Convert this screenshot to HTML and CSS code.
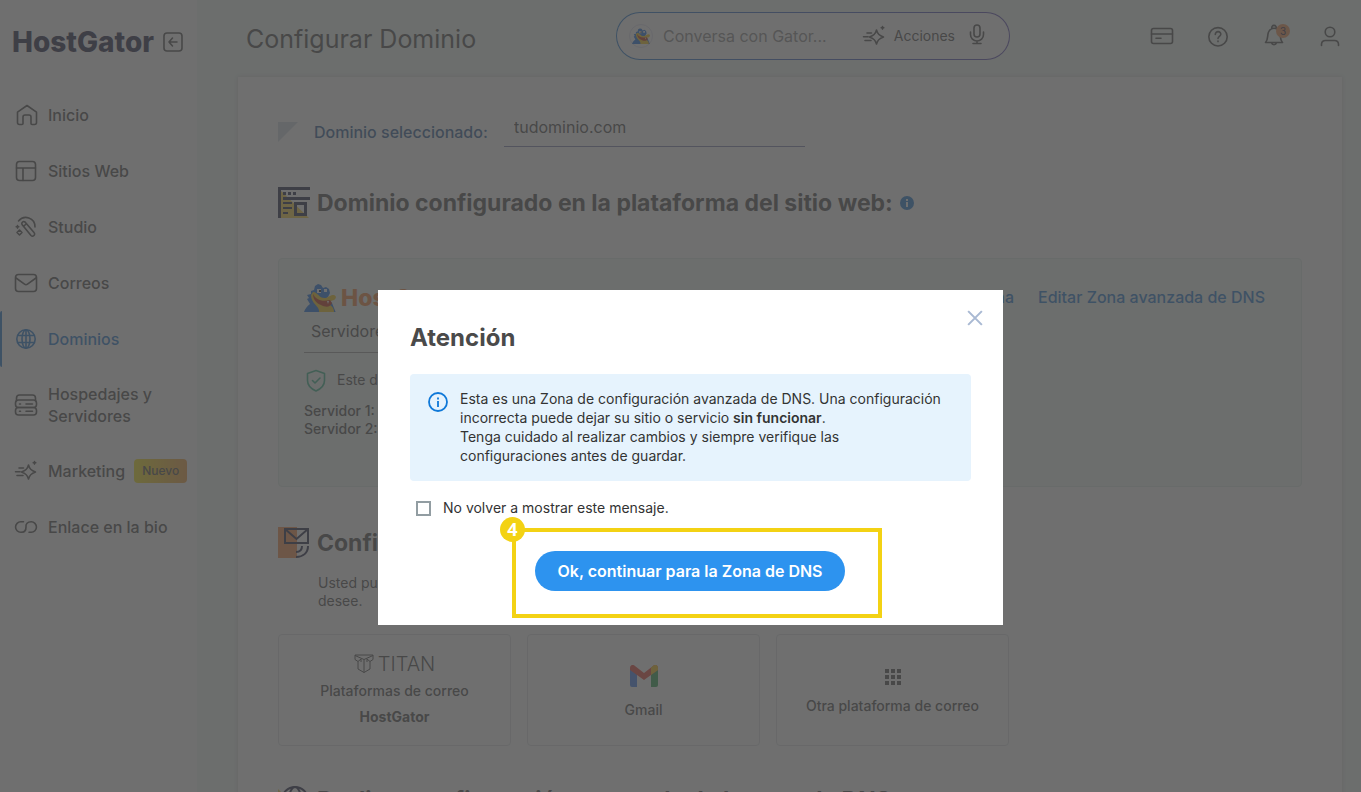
FILE: index.html
```html
<!DOCTYPE html>
<html lang="es">
<head>
<meta charset="utf-8">
<title>Configurar Dominio</title>
<link rel="stylesheet" href="styles.css">
</head>
<body>
<svg class="defs" aria-hidden="true">
  <symbol id="spark" viewBox="0 0 24 24">
    <path d="M14.500 6c1 4 2.500 5.500 7 7-4.500 1.500-6 3-7 7-1-4-2.500-5.500-7-7 4.500-1.500 6-3 7-7zM5 9h4.500M1.500 12.800h4.500M3 16.500h6M20.500 2.500v2.600M19.200 3.800h2.600"/>
  </symbol>
  <symbol id="gator" viewBox="0 0 32 28">
    <path fill="#1a6fe0" d="M0 28c1-3 3-6 6-8-1-2-2-3-3-5l2-1-2-3 4-1V7l3-1 1-4 3-2 3 1 2 3 3-1 3 2 1 4-2 4-2 2 6 4 4 10z"/>
    <path fill="#f5c518" d="M9 8c5 0 6 7 13 6 3-1 4-3 8-3 3 1 2 4 0 5-2 1-4 1-6 1l1 3c2 2 5 3 5 8H15c1-6-8-8-8-17z"/>
    <path fill="#c22d12" d="M9 10c3 6 9 8 17 6l2 3c-2 5-7 4-11 2-5-2-8-6-8-11z"/>
    <path fill="#fff" d="M13 5h4v4h-4zM20 5h3v3h-3zM23 17h2l-1 3z"/><path fill="#222" d="M15 6h2v2h-2z"/>
  </symbol>
</svg>
<div class="app">
  <aside class="sidebar">
    <div class="brand">
      <span class="brand-name">HostGator</span>
      <button class="icon-btn" aria-label="Contraer menú"><svg class="ico ico-20" viewBox="0 0 20 20"><rect x="1" y="1" width="18" height="18" rx="3"/><path d="M14 10H6M9.500 6L6 10l3.500 4"/></svg></button>
    </div>
    <nav class="nav">
      <a href="#" class="nav-item"><svg class="ico" viewBox="0 0 24 24"><path d="M3.500 9.200L13 2.500l9.500 6.700v10.300a2 2 0 0 1-2 2h-2.500a1 1 0 0 1-1-1v-6.500a2 2 0 0 0-2-2h-4a2 2 0 0 0-2 2v6.500a1 1 0 0 1-1 1H5.500a2 2 0 0 1-2-2z"/></svg>Inicio</a>
      <a href="#" class="nav-item"><svg class="ico" viewBox="0 0 24 24"><rect x="2.500" y="2.500" width="19" height="19" rx="3"/><path d="M2.500 9h19M9 9v12.500"/></svg>Sitios Web</a>
      <a href="#" class="nav-item"><svg class="ico" viewBox="0 0 24 24"><path d="M4.500 6C10-.5 21 2.500 21 12M8 9.500a2 2 0 0 1 3-2.500l9 10.500a2 2 0 0 1-3 3zM9.500 11.500l2.500-2.500M3.500 10.500v2.600M2.200 11.800h2.600M5.500 15l2.500 2.500L5.500 20 3 17.500z"/></svg>Studio</a>
      <a href="#" class="nav-item"><svg class="ico" viewBox="0 0 24 24"><rect x="1.500" y="3.500" width="21" height="17" rx="3"/><path d="M2 7l8.500 6.200a2.500 2.500 0 0 0 3 0L22 7"/></svg>Correos</a>
      <a href="#" class="nav-item active"><svg class="ico" viewBox="0 0 24 24"><circle cx="12" cy="12" r="9.200"/><ellipse cx="12" cy="12" rx="4" ry="9.200"/><path d="M4 8.500h16M4 15.500h16M12 3v18"/></svg>Dominios</a>
      <a href="#" class="nav-item tall"><svg class="ico" viewBox="0 0 24 24"><path d="M2.500 8V5a3 3 0 0 1 3-3h13a3 3 0 0 1 3 3v3"/><rect x="1.500" y="7" width="21" height="7.500" rx="3"/><rect x="1.500" y="14.500" width="21" height="7.500" rx="3"/><path d="M5.500 11h1M12 11h6.500M5.500 18.200h1M12 18.200h6.500"/></svg><span>Hospedajes y Servidores</span></a>
      <a href="#" class="nav-item"><svg class="ico"><use href="#spark"/></svg>Marketing<span class="tag">Nuevo</span></a>
      <a href="#" class="nav-item"><svg class="ico" viewBox="0 0 24 24"><path d="M9.500 6.800H6.800a5.200 5.200 0 0 0 0 10.500c3.700 0 5.200-2 5.200-5.300M15 17.300h2.200a5.200 5.200 0 0 0 0-10.500c-3.700 0-5.700 2-5.200 5.200 0 3-1 5.300-4 5.300"/></svg>Enlace en la bio</a>
    </nav>
  </aside>

  <div class="main">
    <header class="topbar">
      <h1>Configurar Dominio</h1>
      <div class="chat">
        <span class="avatar"><svg viewBox="0 0 32 28"><use href="#gator"/></svg></span>
        <input class="chat-input" type="text" aria-label="Conversa con Gator" placeholder="Conversa con Gator...">
        <button class="chat-action"><svg class="ico"><use href="#spark"/></svg>Acciones</button>
        <button class="icon-btn" aria-label="Dictar"><svg class="ico" viewBox="0 0 24 24"><rect x="9" y="1" width="6" height="12" rx="3"/><path d="M5.500 8v2.500a6.500 6.500 0 0 0 13 0V8M12 17v2.500M8 19.500h8"/></svg></button>
      </div>
      <div class="tools">
        <button class="icon-btn" aria-label="Facturación"><svg class="ico" viewBox="0 0 24 24"><rect x="1.500" y="4.500" width="21" height="15" rx="2"/><path d="M1.500 10h21M6 14.200h5"/></svg></button>
        <button class="icon-btn" aria-label="Ayuda"><svg class="ico" viewBox="0 0 24 24"><circle cx="12" cy="12.800" r="9.200"/><path d="M9.300 10.500c0-4 5.700-3.500 5.500-.2 0 2-2.800 2-2.800 4.200M12 17v.6"/></svg></button>
        <button class="icon-btn bell" aria-label="Notificaciones"><svg class="ico" viewBox="0 0 24 24"><path d="M10 4.500a2.200 2.200 0 1 1 4 0M3.500 18.500c3-3 1.500-7 3-10.500 2-5 9-5 11 0 1.500 3.500 0 7.500 3 10.500zM9.500 18.800a2.600 2.600 0 0 0 5 0"/></svg><span class="count">3</span></button>
        <button class="icon-btn" aria-label="Cuenta"><svg class="ico" viewBox="0 0 24 24"><circle cx="12" cy="8" r="4.800"/><path d="M3.500 21.500v-1.500a4 4 0 0 1 4-3.500h9a4 4 0 0 1 4 3.500v1.500"/></svg></button>
      </div>
    </header>

    <main class="panel">
      <div class="domain-row">
        <svg class="corner" viewBox="0 0 20 20"><path d="M0 0h20L0 20z"/></svg>
        <label for="domain">Dominio seleccionado:</label>
        <input id="domain" type="text" value="tudominio.com">
      </div>

      <section class="site">
        <h2><svg class="h-ico" viewBox="0 0 32 32"><path fill="#f7cf3d" d="M3 4l28 27H3z"/><path fill="#1f2044" d="M0 0h32v3H3v28H0zM5 5h3v3H5zM10 5h3v3h-3zM15 5h3v3h-3zM5 10h27v3H5zM5 15h9v2H5zM5 20h9v2H5zM5 25h5v2H5zM16 15h13v14H16zm3 3v8h7v-8z" fill-rule="evenodd"/></svg>Dominio configurado en la plataforma del sitio web:<svg class="info-dot" viewBox="0 0 14 14"><circle cx="7" cy="7" r="7"/><path d="M6 3h2v2H6zM6 6h2v5H6z"/></svg></h2>
        <div class="server-card">
          <div class="server-head">
            <div class="server-brand"><svg viewBox="0 0 32 28"><use href="#gator"/></svg>HostGator</div>
            <a href="#">Configurar zona</a>
            <a href="#">Editar Zona avanzada de DNS</a>
          </div>
          <div class="server-type">Servidores</div>
          <div class="status"><svg class="ico shield" viewBox="0 0 24 24"><path d="M12 2.500l8.500 3v7c0 5-4 8.500-8.500 10.500-4.500-2-8.500-5.500-8.500-10.500v-7zM8.500 12.500l2.500 2.500 5-5"/></svg>Este dominio</div>
          <div class="ns">Servidor 1: dns1<br>Servidor 2: dns2</div>
        </div>
      </section>

      <section class="mail">
        <h2><svg class="h-ico" viewBox="0 0 32 32"><path fill="#f58a45" d="M0 0h19v31H0z"/><path fill="none" stroke="#1f2044" stroke-width="2" d="M7 2h23v14H7zM7 2l11.500 10L30 2M18 25c3.500 0 6-2 6-6M18 30c7 0 12-4 12-11"/></svg>Configurar correo</h2>
        <p>Usted puede elegir la plataforma de correo electrónico que<br>desee.</p>
        <div class="options">
          <button class="option"><span class="titan"><svg viewBox="0 0 20 20"><path d="M1 1h18v4.500l-3 2V15l-6 3.500L4 15V7.500l-3-2zM1 1.500L10 5.500l9-4M10 5.500v13M4 7.500l3-2.500v3M16 7.500L13 5v3"/></svg>TITAN</span><span>Plataformas de correo</span><strong>HostGator</strong></button>
          <button class="option gmail"><svg viewBox="0 0 28 22"><path fill="#3f7df0" d="M0 3l7 5v14H2a2 2 0 0 1-2-2z"/><path fill="#2aa352" d="M21 8l7-5v17a2 2 0 0 1-2 2h-5z"/><path fill="#e84335" d="M0 3C0 0 3-1 5 1l9 7 9-7c2-2 5-1 5 2v2L14 15 0 5z"/><path fill="#f8c416" d="M21 2.500l2-1.500c2-2 5-1 5 2v2l-7 5z"/></svg><span>Gmail</span></button>
          <button class="option other"><svg viewBox="0 0 16 16"><path d="M0 0h4v4H0zM6 0h4v4H6zM12 0h4v4h-4zM0 6h4v4H0zM6 6h4v4H6zM12 6h4v4h-4zM0 12h4v4H0zM6 12h4v4H6zM12 12h4v4h-4z"/></svg><span>Otra plataforma de correo</span></button>
        </div>
      </section>

      <section class="records">
        <h2><svg class="h-ico" viewBox="0 0 32 32"><path fill="#f7cf3d" d="M0 3l20 20H0z"/><g fill="none" stroke="#1f2044" stroke-width="2"><circle cx="17" cy="14" r="13"/><ellipse cx="17" cy="14" rx="6" ry="13"/></g></svg>Realizar configuración avanzada de la zona de DNS</h2>
      </section>
    </main>
  </div>
</div>

<div class="overlay">
  <div class="dialog" role="dialog" aria-modal="true" aria-labelledby="dlg-title">
    <button class="close" aria-label="Cerrar"><svg viewBox="0 0 14 14"><path d="M1 1l12 12M13 1L1 13"/></svg></button>
    <h2 id="dlg-title">Atención</h2>
    <div class="notice">
      <svg viewBox="0 0 20 20"><circle cx="10" cy="10" r="9"/><path d="M10 9v6M10 5.500v2"/></svg>
      <p>Esta es una Zona de configuración avanzada de DNS. Una configuración<br>incorrecta puede dejar su sitio o servicio <strong>sin funcionar</strong>.<br>Tenga cuidado al realizar cambios y siempre verifique las<br>configuraciones antes de guardar.</p>
    </div>
    <label class="check"><input type="checkbox">No volver a mostrar este mensaje.</label>
    <div class="step">
      <span class="step-no">4</span>
      <button class="primary">Ok, continuar para la Zona de DNS</button>
    </div>
  </div>
</div>
</body>
</html>
```

FILE: styles.css
```css
* { box-sizing: border-box; }
body {
  margin: 0;
  font-family: Inter, "Liberation Sans", sans-serif;
  font-size: 14px;
  line-height: 18px;
  color: #4a4a4a;
  background: #eef8f4;
}
h1, h2, p { margin: 0; }
a { color: #1f78d0; text-decoration: none; }
button { font: inherit; color: inherit; background: none; border: 0; padding: 0; }
input { font: inherit; color: inherit; }
.defs { position: absolute; width: 0; height: 0; }

.ico {
  flex: none;
  width: 24px;
  height: 24px;
  fill: none;
  stroke: currentColor;
  stroke-width: 1.6;
  stroke-linecap: round;
  stroke-linejoin: round;
}
.ico-20 { width: 20px; height: 20px; }
.icon-btn { display: flex; }

.app { display: grid; grid-template-columns: 197px 1fr; height: 100vh; overflow: hidden; }

.sidebar { background: #fff; }
.brand { display: flex; align-items: center; gap: 8px; padding: 26px 0 0 12px; }
.brand-name { width: 143px; font-size: 28px; line-height: 32px; font-weight: 800; color: #1f2044; }
.nav { display: flex; flex-direction: column; padding-top: 29px; }
.nav-item {
  display: flex;
  align-items: center;
  gap: 10px;
  height: 56px;
  padding-left: 14px;
  border-left: 0 solid #1f78d0;
  font-size: 16px;
  line-height: 22px;
  font-weight: 500;
  color: #4a4a4a;
}
.nav-item.active { border-left-width: 2px; border-radius: 2px; padding-left: 12px; color: #1f78d0; }
.nav-item.tall { height: 76px; }
.tag {
  margin-left: -1px;
  padding: 3px 8px;
  border-radius: 4px;
  font-size: 12px;
  line-height: 18px;
  background: linear-gradient(90deg, #f5e614, #f09a3c);
}

.main { min-width: 0; overflow: hidden; }
.topbar { display: flex; align-items: flex-start; height: 77px; padding: 12px 19px 0 49px; }
.topbar h1 { flex: 0 0 370px; padding-top: 11px; font-size: 25px; line-height: 32px; font-weight: 400; }
.chat {
  display: flex;
  align-items: center;
  flex: 0 0 394px;
  min-width: 0;
  height: 48px;
  padding: 0 20px 0 12px;
  border: 1px solid transparent;
  border-radius: 24px;
  background: linear-gradient(#fff, #fff) padding-box, linear-gradient(90deg, #1f78d0, #5b49b0) border-box;
}
.avatar { display: grid; flex: none; place-items: center; width: 24px; height: 24px; border: 1px solid #dde; border-radius: 12px; }
.avatar svg { width: 18px; height: 18px; }
.chat-input { flex: 1; width: 0; min-width: 0; margin-left: 10px; padding: 0; border: 0; background: none; font-size: 16px; }
.chat-input::placeholder { color: #8a8a8a; opacity: 1; }
.chat-action { display: flex; align-items: center; gap: 8px; margin-right: 10px; }
.tools { display: flex; gap: 32px; margin-left: auto; padding-top: 12px; }
.bell { position: relative; }
.count {
  position: absolute;
  top: 0;
  right: -4px;
  width: 14px;
  height: 14px;
  border-radius: 7px;
  background: #f09050;
  color: #1f2044;
  font-size: 10px;
  line-height: 14px;
  text-align: center;
}

.panel {
  height: 100vh;
  margin: 0 19px 0 41px;
  padding: 32px 40px 0;
  background: #fff;
  box-shadow: 0 0 4px #ccc;
}
.domain-row { display: flex; align-items: flex-start; height: 38px; }
.corner { width: 20px; height: 20px; margin-top: 13px; fill: #d0d8e2; }
.domain-row label { flex: 0 0 190px; padding-top: 12px; margin-left: 16px; font-size: 16px; line-height: 22px; font-weight: 500; color: #2a5b96; }
.domain-row input { width: 301px; height: 38px; padding: 0 10px 2px; border: 0; border-bottom: 1px solid #7c84b0; background: none; font-size: 16px; }

.panel h2 { display: flex; align-items: center; gap: 7px; height: 32px; font-size: 23px; line-height: 32px; font-weight: 700; white-space: nowrap; }
.h-ico { flex: none; width: 32px; height: 32px; }
.info-dot { width: 14px; height: 14px; fill: #1f78d0; }
.info-dot path { fill: #fff; }

.site { padding-top: 40px; }
.server-card { height: 229px; margin-top: 39px; padding: 25px 36px 0 25px; border: 1px solid #dcebe6; border-radius: 4px; background: #f0f8f5; }
.server-head { display: flex; gap: 24px; font-size: 16px; font-weight: 500; line-height: 26px; }
.server-brand { display: flex; gap: 5px; margin-right: auto; font-size: 23px; line-height: 28px; font-weight: 800; color: #f0813a; }
.server-brand svg { width: 32px; height: 28px; }
.server-type { width: 300px; height: 41px; padding: 7px; border-bottom: 1px solid #9a9a9a; font-size: 16px; line-height: 24px; }
.status { display: flex; align-items: center; gap: 9px; padding-top: 15px; }
.shield { color: #35b58a; }
.ns { padding-top: 10px; font-weight: 500; }

.mail { padding-top: 40px; }
.mail p { padding: 15px 0 0 40px; }
.options { display: grid; grid-template-columns: repeat(3, 233px); gap: 16px; margin-top: 24px; }
.option {
  display: flex;
  flex-direction: column;
  align-items: center;
  justify-content: center;
  gap: 8px;
  height: 112px;
  border: 1px solid #dcdfe2;
  border-radius: 4px;
  font-weight: 500;
}
.titan { display: flex; align-items: center; gap: 4px; font-size: 20px; font-weight: 300; line-height: 20px; }
.titan svg { width: 20px; height: 20px; fill: none; stroke: currentColor; }
.gmail { gap: 14px; padding-top: 4px; }
.gmail svg { width: 28px; height: 22px; }
.other { gap: 12px; padding-top: 4px; }
.other svg { width: 16px; height: 16px; fill: #4a4a4a; }
.records { padding-top: 40px; }
.records h2 { align-items: flex-start; line-height: 28px; }

.overlay {
  position: fixed;
  inset: 0;
  display: flex;
  justify-content: center;
  align-items: flex-start;
  padding: 290px 0 0 20px;
  background: rgba(72, 72, 72, 0.785);
}
.dialog { position: relative; width: 625px; padding: 32px 32px 7px; background: #fff; }
.dialog h2 { font-size: 24px; line-height: 32px; font-weight: 700; }
.close { position: absolute; top: 20px; right: 20px; display: flex; width: 16px; height: 16px; }
.close svg { width: 16px; height: 16px; fill: none; stroke: #a9b9d3; stroke-width: 1.8; }
.notice { display: flex; gap: 12px; margin-top: 20px; padding: 15px 18px 16px; border-radius: 4px; background: #e6f3fd; color: #333; line-height: 19px; white-space: nowrap; }
.notice svg { flex: none; width: 20px; height: 20px; margin-top: 3px; fill: none; stroke: #0f78d8; stroke-width: 1.8; }
.notice strong { font-weight: 600; }
.check { display: flex; align-items: center; gap: 12px; margin: 18px 0 0 6px; color: #333; }
.check input { appearance: none; width: 15px; height: 15px; margin: 0; border: 2px solid #929da2; background: #fff; }
.step { position: relative; width: 370px; height: 90px; margin: 11px 0 0 102px; padding: 19px; border: 4px solid #f3d214; }
.step-no {
  position: absolute;
  top: -15px;
  left: -16px;
  width: 25px;
  height: 25px;
  border-radius: 50%;
  background: #f3d214;
  color: #fff;
  font: 700 18px/24px "Open Sans", sans-serif;
  text-align: center;
}
.primary { width: 310px; height: 40px; border-radius: 20px; background: #2d93ef; color: #fff; font-size: 16px; font-weight: 600; }
```
